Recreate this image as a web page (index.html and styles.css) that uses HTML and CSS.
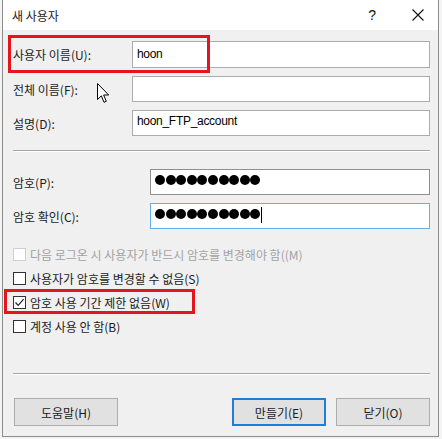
FILE: index.html
```html
<!DOCTYPE html>
<html>
<head>
<meta charset="utf-8">
<title>새 사용자</title>
<link rel="stylesheet" href="styles.css">
</head>
<body>
<div class="window">
  <div class="titlebar">
    <span class="title">새 사용자</span>
    <span class="help">?</span>
    <svg class="close" width="12" height="12" viewBox="0 0 12 12"><path d="M0.5 0.5L11.5 11.5M11.5 0.5L0.5 11.5" stroke="#111" stroke-width="1.1" fill="none"/></svg>
  </div>
  <div class="content">
    <div class="fields names">
      <label>사용자 이름(U):</label><div class="edit tall">hoon</div>
      <label>전체 이름(F):</label><div class="edit"></div>
      <label>설명(D):</label><div class="edit">hoon_FTP_account</div>
    </div>
    <div class="sep"></div>
    <div class="fields pw">
      <label>암호(P):</label>
      <div class="edit dark"><span class="dots"><i></i><i></i><i></i><i></i><i></i><i></i><i></i><i></i><i></i><i></i></span></div>
      <label>암호 확인(C):</label>
      <div class="edit focus"><span class="dots"><i></i><i></i><i></i><i></i><i></i><i></i><i></i><i></i><i></i><i></i></span><span class="caret"></span></div>
    </div>
    <div class="checks">
      <div class="check disabled"><span class="box"></span>다음 로그온 시 사용자가 반드시 암호를 변경해야 함((M)</div>
      <div class="check"><span class="box"></span>사용자가 암호를 변경할 수 없음(S)</div>
      <div class="check"><span class="box"><svg width="11" height="11" viewBox="0 0 11 11"><path d="M1.5 5.5L4.2 8.3L9.6 2.2" stroke="#222" stroke-width="1.2" fill="none"/></svg></span>암호 사용 기간 제한 없음(W)</div>
      <div class="check"><span class="box"></span>계정 사용 안 함(B)</div>
    </div>
    <div class="sep bottom"></div>
    <div class="buttons">
      <button class="btn help-btn">도움말(H)</button>
      <span class="spacer"></span>
      <button class="btn default">만들기(E)</button>
      <button class="btn">닫기(O)</button>
    </div>
  </div>
  <div class="mark mark-user"></div>
  <div class="mark mark-expire"></div>
  <svg class="cursor" width="13" height="21" viewBox="0 0 13 21"><path d="M0.5 0.5L0.5 16.5L4.3 12.8L7 19.3L9.3 18.3L6.6 12L11.7 12Z" fill="#fff" stroke="#000" stroke-width="1" stroke-linejoin="miter"/></svg>
</div>
</body>
</html>
```

FILE: styles.css
```css
html, body {
  margin: 0;
  padding: 0;
}
body {
  background-color: #f4f4f4;
  font-family: "Noto Sans CJK KR", "Liberation Sans", sans-serif;
  font-size: 12px;
  color: #1b1b1b;
}
.window {
  position: relative;
  box-sizing: border-box;
  margin-left: 2px;
  width: 437px;
  height: 437px;
  background-color: #f0f0f0;
  border: 1px solid #8c8c8c;
  border-top: 0;
}
.titlebar {
  display: flex;
  align-items: center;
  height: 30px;
  background-color: #fff;
  padding-left: 9px;
}
.title {
  flex: 1;
  color: #222;
}
.help {
  font-family: "Liberation Sans", sans-serif;
  font-size: 14px;
  color: #111;
  margin-right: 36px;
}
.close {
  margin-right: 14px;
}
.content {
  padding: 11px 8px 0 10px;
}
.fields {
  display: grid;
  align-items: center;
  row-gap: 8px;
}
.names {
  grid-template-columns: 119px 1fr;
  grid-template-rows: 27px 26px 26px;
}
.pw {
  grid-template-columns: 137px 1fr;
  grid-template-rows: 26px 26px;
  margin-top: 17px;
}
.fields label {
  align-self: center;
}
.edit {
  box-sizing: border-box;
  height: 100%;
  background-color: #fff;
  border: 1px solid #acacac;
  padding: 3px 0 0 4px;
  font-family: "Liberation Sans", sans-serif;
  font-size: 12px;
  letter-spacing: -0.3px;
  line-height: 14px;
  color: #000;
}
.edit.tall {
  padding-top: 5px;
}
.edit.dark {
  border-color: #8f8f8f;
}
.edit.focus {
  border-color: #6aaee8;
  display: flex;
  align-items: flex-start;
}
.dots {
  display: flex;
  gap: 0.6px;
  padding-top: 2px;
}
.dots i {
  display: block;
  width: 10px;
  height: 10px;
  border-radius: 50%;
  background-color: #000;
}
.caret {
  display: block;
  width: 1px;
  height: 16px;
  margin-left: 1px;
  background-color: #000;
}
.sep {
  height: 1px;
  background-color: #a6a6a6;
  border-bottom: 1px solid #fff;
  margin-top: 14px;
}
.sep.bottom {
  margin-top: 35px;
}
.checks {
  margin-top: 13px;
}
.check {
  display: flex;
  align-items: center;
  height: 24px;
}
.box {
  box-sizing: border-box;
  display: flex;
  align-items: center;
  justify-content: center;
  width: 13px;
  height: 13px;
  border: 1px solid #333;
  background-color: #fff;
  margin-right: 4px;
}
.check.disabled {
  color: #a2a2a2;
}
.check.disabled .box {
  border-color: #cfcfcf;
}
.buttons {
  display: flex;
  gap: 10px;
  margin-top: 23px;
  padding-left: 1px;
}
.spacer {
  flex: 1;
}
.btn {
  box-sizing: border-box;
  height: 28px;
  width: 94px;
  background-color: #e1e1e1;
  border: 1px solid #adadad;
  font-family: "Noto Sans CJK KR", "Liberation Sans", sans-serif;
  font-size: 12px;
  color: #1b1b1b;
  padding: 0;
}
.help-btn {
  width: 104px;
}
.btn.default {
  border: 2px solid #1e7fd6;
}
.mark {
  position: absolute;
  box-sizing: border-box;
  border: 3px solid #e3161f;
}
.mark-user {
  left: 5px;
  top: 35px;
  width: 202px;
  height: 38px;
}
.mark-expire {
  left: 1px;
  top: 289px;
  width: 191px;
  height: 25px;
}
.cursor {
  position: absolute;
  left: 94px;
  top: 83px;
}
```
